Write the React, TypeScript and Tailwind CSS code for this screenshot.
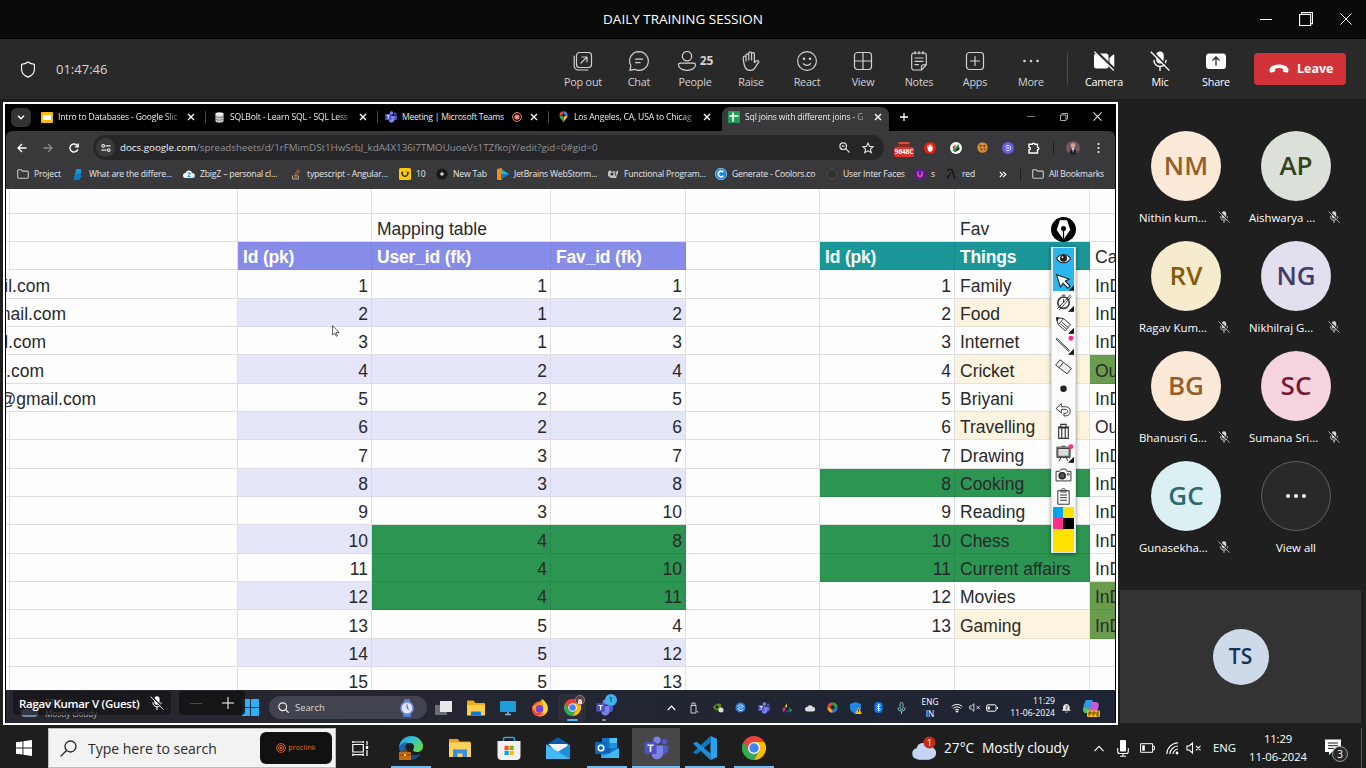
import React from "react";

type IconProps = { className?: string };

/* ---------- meeting toolbar icons ---------- */

const Stroke = ({ children, className = "size-5", w = 1.2 }: { children: React.ReactNode; className?: string; w?: number }) => (
  <svg viewBox="0 0 20 20" fill="none" stroke="currentColor" strokeWidth={w} strokeLinecap="round" strokeLinejoin="round" className={className}>
    {children}
  </svg>
);

const PopOutIcon = () => (
  <Stroke>
    <rect x="3.500" y="1.500" width="15" height="15" rx="3" />
    <path d="M1.200 5v9.700a4.300 4.300 0 0 0 4.300 4.300H15M8 12l5.800-5.800M9 6h5v5" />
  </Stroke>
);
const ChatIcon = () => (
  <Stroke>
    <path d="M10 .6a9.400 9.400 0 1 1-4.500 17.700L.9 19.400l1-4.700A9.400 9.400 0 0 1 10 .6ZM6.600 8.200h7M6.600 11.700h4.500" />
  </Stroke>
);
const PeopleIcon = () => (
  <Stroke>
    <circle cx="10" cy="5.200" r="4.700" />
    <path d="M3.300 12.200h13.400c1 0 1.800.8 1.800 1.800 0 3-3.500 5.400-8.500 5.400S1.500 17 1.500 14c0-1 .8-1.800 1.800-1.800Z" />
  </Stroke>
);
const RaiseIcon = () => (
  <Stroke>
    <path d="M5 10V4.200a1.400 1.400 0 0 1 2.800 0V9M7.800 9V2.200a1.400 1.400 0 0 1 2.800 0V9M10.600 9V3a1.400 1.400 0 0 1 2.800 0v8.500M13.400 11.500l2.200-1.700c1-.6 2.200.2 2.400 1.200-1.700 1.700-2.600 3.300-3.600 5.300-1 2-2.600 3.100-4.700 3.100C6 19.400 4 17 3.300 14 2.700 11.500 2.200 8.500 2.200 6.500a1.400 1.400 0 0 1 2.800 0" />
  </Stroke>
);
const ReactIcon = () => (
  <Stroke>
    <circle cx="10" cy="10" r="9.400" />
    <path d="M6.300 12.700c1.800 2.300 5.600 2.300 7.400 0" />
    <circle cx="7" cy="7.800" r=".7" fill="currentColor" />
    <circle cx="13" cy="7.800" r=".7" fill="currentColor" />
  </Stroke>
);
const ViewIcon = () => (
  <Stroke>
    <rect x="1.500" y="1.500" width="17" height="17" rx="3" />
    <path d="M10 1.500v17M1.500 10h17" />
  </Stroke>
);
const NotesIcon = () => (
  <Stroke>
    <path d="M5 2h10a2.300 2.300 0 0 1 2.300 2.300v9.500L12.500 19H5a2.300 2.300 0 0 1-2.300-2.300V4.300A2.300 2.300 0 0 1 5 2ZM17.300 13.800h-2.800a2 2 0 0 0-2 2V19M6 .6V3M10 .6V3M14 .6V3M6 7h8M6 10.300h8M6 13.600h3.500" />
  </Stroke>
);
const AppsIcon = () => (
  <Stroke>
    <rect x="1.500" y="1.500" width="17" height="17" rx="3" />
    <path d="M10 5.500v9M5.500 10h9" />
  </Stroke>
);
const MoreIcon = () => (
  <svg viewBox="0 0 20 20" fill="currentColor" className="size-5">
    <circle cx="3.500" cy="10" r="1.300" />
    <circle cx="10" cy="10" r="1.300" />
    <circle cx="16.500" cy="10" r="1.300" />
  </svg>
);
const CameraOffIcon = () => (
  <svg viewBox="0 0 22 20" className="h-5 w-[22px]">
    <path d="M3.500 2.500h9.500a2.500 2.500 0 0 1 2.500 2.500v10a2.500 2.500 0 0 1-2.500 2.500H3.500A2.500 2.500 0 0 1 1 15V5a2.500 2.500 0 0 1 2.500-2.500Z" fill="#fff" />
    <path d="M16.500 7 20 3.800c.6-.5 1.300-.2 1.300.6v11.200c0 .8-.7 1.100-1.300.6l-3.500-3.200Z" fill="#fff" />
    <path d="M3 .3 22 18.800" stroke="#292929" strokeWidth="2.600" />
    <path d="m1.300.6 19.500 18.900" stroke="#fff" strokeWidth="1.200" />
  </svg>
);
const MicOffIcon = ({ className = "size-5", cut = "#292929" }: IconProps & { cut?: string }) => (
  <svg viewBox="0 0 20 20" className={className}>
    <rect x="6.300" y=".5" width="7.400" height="12" rx="3.700" fill="currentColor" />
    <path d="M4 9.500a6 6 0 0 0 12 0M10 15.500v4" stroke="currentColor" strokeWidth="1.400" fill="none" strokeLinecap="round" />
    <path d="M2.300.3 20 18" stroke={cut} strokeWidth="1.800" />
    <path d="m.8.800 18.500 18.700" stroke="currentColor" strokeWidth="1.300" />
  </svg>
);
const ShareIcon = () => (
  <svg viewBox="0 0 22 20" className="h-5 w-[22px]">
    <rect x="1" y="2.500" width="20" height="15.500" rx="3" fill="#fff" />
    <path d="M11 14.800V6.500M7.500 9.500 11 6l3.500 3.500" stroke="#292929" strokeWidth="1.300" fill="none" />
  </svg>
);
const HangUpIcon = () => (
  <svg viewBox="0 0 20 10" className="h-[10px] w-5">
    <path d="M10 .6c4.300 0 7.400 1.300 8.900 3.400.8 1.200.6 2.700.3 3.700-.2.700-.8 1-1.500.9l-2.500-.5c-.8-.2-1.300-.8-1.300-1.500V4.800C12.500 4.300 11.300 4.100 10 4.100s-2.500.2-3.900.7v1.800c0 .7-.5 1.300-1.300 1.500l-2.500.5c-.7.1-1.300-.2-1.500-.9C.5 6.700.3 5.200 1.100 4 2.600 1.900 5.700.6 10 .6Z" fill="#fff" />
  </svg>
);

/* ---------- brand and app icons ---------- */

const ChromeIcon = ({ className = "size-6" }: IconProps) => (
  <svg viewBox="0 0 48 48" className={className}>
    <path d="M24 24 3.200 12A24 24 0 0 0 24 48l10.400-18Z" fill="#34a853" />
    <path d="M24 24l10.400 6L24 48A24 24 0 0 0 44.800 12H24Z" fill="#fbbc04" />
    <path d="M3.200 12 13.600 30 24 24V12h20.800A24 24 0 0 0 3.200 12Z" fill="#ea4335" />
    <circle cx="24" cy="24" r="12" fill="#fff" />
    <circle cx="24" cy="24" r="9.500" fill="#4285f4" />
  </svg>
);
const TeamsIcon = ({ className = "size-6" }: IconProps) => (
  <svg viewBox="0 0 24 24" className={className}>
    <circle cx="20.500" cy="5.500" r="2.700" fill="#5059c9" />
    <path d="M17 9.500h6.500c.3 0 .5.200.5.500V15a4 4 0 0 1-7 2Z" fill="#5059c9" />
    <circle cx="13" cy="4.200" r="3.600" fill="#7b83eb" />
    <path d="M8 9.500h11v8a6 6 0 0 1-11 3Z" fill="#7b83eb" />
    <rect x=".5" y="6" width="12" height="12" rx="1" fill="#4b53bc" />
    <path d="M3.500 9.200h6M6.500 9.200v6.500" stroke="#fff" strokeWidth="1.600" />
  </svg>
);
const FolderIcon = ({ className = "size-6" }: IconProps) => (
  <svg viewBox="0 0 24 24" className={className}>
    <path d="M1 3h9l1.500 2.500H22V20H1Z" fill="#e8a31c" />
    <path d="M1 6.500h22v14.500H1Z" fill="#fcd35e" />
    <path d="M5 21v-7.500h14V21h-4.500v-3.500h-5V21Z" fill="#3b8ede" />
  </svg>
);
const Folder11Icon = () => (
  <svg viewBox="0 0 20 18" className="h-[18px] w-5">
    <path d="M1 3c0-1 .6-1.500 1.500-1.500h5L9.500 4H18c.7 0 1 .4 1 1v10H1Z" fill="#f0a917" />
    <path d="M1 6h18v10.500H1Z" fill="#fdcf4b" />
    <path d="M5 16.500v-3c0-.6.400-1 1-1h8c.6 0 1 .4 1 1v3Z" fill="#1878cf" />
  </svg>
);
const EdgeIcon = () => (
  <svg viewBox="0 0 24 24" className="size-6">
    <defs>
      <linearGradient id="edgeTop" x1="0" y1="0" x2="1" y2=".6">
        <stop offset="0" stopColor="#2196d8" />
        <stop offset=".5" stopColor="#33c3d6" />
        <stop offset="1" stopColor="#63d84b" />
      </linearGradient>
    </defs>
    <path d="M0 12A12 12 0 0 1 12 0c7 0 12 5 12 10 0 4-3 6-6 6-2.500 0-4-1-4-2 0-.6 1-1 1-3a4 4 0 0 0-4-4C6 7 1 9 0 12Z" fill="url(#edgeTop)" />
    <path d="M0 12c1-4 5-6 9-5.500C6 8 6 12 7.500 15c2 4 7 6 14 3A12 12 0 0 1 0 12Z" fill="#1464b4" />
    <path d="M9 6.500C4.500 10 8 18 14 19.500c3 .5 6-.5 7.500-1.500A12 12 0 0 1 12 24C7 22 3 12 9 6.500Z" fill="#0f4c91" />
    <rect x="0" y="16" width="12" height="8" rx=".8" fill="#c66a12" />
    <path d="M4 16v-1.500h4V16M0 19h12" stroke="#7a3c06" strokeWidth="1" fill="none" />
    <rect x="5" y="18" width="2" height="2" fill="#ffd56a" />
  </svg>
);
const StoreIcon = () => (
  <svg viewBox="0 0 24 24" className="size-6">
    <path d="M6.500 6V3c0-1 .5-1.500 1.500-1.500h8c1 0 1.500.5 1.500 1.500v3" stroke="#29a8e8" strokeWidth="1.500" fill="none" />
    <path d="M.5 5h23v15a4 4 0 0 1-4 4h-15a4 4 0 0 1-4-4Z" fill="#f1f1f1" />
    <path d="M7.500 9.800h4.200V14H7.500Z" fill="#f25022" />
    <path d="M12.500 9.800h4.200V14h-4.200Z" fill="#7fba00" />
    <path d="M7.500 14.800h4.200V19H7.500Z" fill="#00a4ef" />
    <path d="M12.500 14.800h4.200V19h-4.200Z" fill="#ffb900" />
  </svg>
);
const MailIcon = () => (
  <svg viewBox="0 0 24 24" className="size-6">
    <path d="M0 9 12 1l12 8v14H0Z" fill="#0b5ca8" />
    <path d="M2.500 8h19v6L12 18Z" fill="#f4f4f4" />
    <path d="M0 8.500 12 16l12-7.500V23H0Z" fill="#27a5e8" />
    <path d="M0 23 24 8.500V23Z" fill="#1c8fdc" />
    <path d="M0 8.500 24 23H0Z" fill="#45bbf5" />
  </svg>
);
const OutlookIcon = () => (
  <svg viewBox="0 0 24 24" className="size-6">
    <path d="M7 2h15v15H7Z" fill="#1373c8" />
    <path d="M14.500 2H22v5h-7.500Z" fill="#50c4f7" />
    <path d="M14.500 7H22v5h-7.500Z" fill="#1a93e6" />
    <path d="M7 12h7.500v5H7Z" fill="#0a5aa5" />
    <path d="M6 13.500 15 18l9-6v10H6Z" fill="#1e9be9" />
    <path d="M6 22 24 12v10Z" fill="#43b7f2" />
    <rect y="6" width="12" height="12" rx="1" fill="#0a66be" />
    <circle cx="6" cy="12" r="2.800" fill="none" stroke="#fff" strokeWidth="1.600" />
  </svg>
);
const VsCodeIcon = () => (
  <svg viewBox="0 0 24 24" className="size-6">
    <path d="M17.500 0 24 2.800v18.400L17.500 24Z" fill="#29a3ee" />
    <path d="M17.500 6.500 3.300 18.600 0 16.600 17.500 0Z" fill="#0b79c4" />
    <path d="M17.500 17.500 3.300 5.400 0 7.400 17.500 24Z" fill="#1b8fdb" />
  </svg>
);
const FirefoxIcon = () => (
  <svg viewBox="0 0 20 20" className="size-[18px]">
    <circle cx="10" cy="11" r="8.500" fill="#ff5a36" />
    <path d="M12 0c4 2.500 7 6 6.500 11.500A8.500 8.500 0 0 1 10 19.500C4 19.500 1 15 1.500 9 3 6 4 7 6 6c3-1 5-3 6-6Z" fill="#ff9a1f" />
    <path d="M12 0c4 3 7.500 7 6.300 13C16.500 18 12 16 13.500 11 14 8 13 3 12 0Z" fill="#ffd52e" />
    <circle cx="9.500" cy="11" r="4.200" fill="#7544d8" />
    <path d="M1.500 8c2 7 5 9 11 7.500-2 4-10 4.500-11-2Z" fill="#f5334d" />
  </svg>
);
const WindowsIcon = ({ className = "size-4", fill = "#fff" }: IconProps & { fill?: string }) => (
  <svg viewBox="0 0 16 16" className={className} fill={fill}>
    <path d="M0 2.300 6.500 1.400v6.200H0ZM7.400 1.300 16 0v7.600H7.400ZM0 8.400h6.500v6.200L0 13.700ZM7.400 8.400H16V16l-8.600-1.300Z" />
  </svg>
);
const WeatherIcon = () => (
  <svg viewBox="0 0 26 24" className="h-6 w-[26px]">
    <path d="M6 23a5.500 5.500 0 0 1-.5-10.800 7 7 0 0 1 13-1.500A6 6 0 0 1 19.500 23Z" fill="#c3d4f4" />
    <path d="M1 18a12 7 0 0 0 24-1 5.600 5.600 0 0 1-5.500 6H6a5.500 5.500 0 0 1-5-5Z" fill="#8fb0e8" />
    <circle cx="18.500" cy="6.500" r="6" fill="#c42b1c" />
    <text x="18.500" y="10" fontSize="9.500" fill="#fff" textAnchor="middle" fontFamily="Open Sans, sans-serif">1</text>
  </svg>
);

const Close = ({ className = "size-2" }: IconProps) => (
  <svg viewBox="0 0 8 8" className={className} fill="none" stroke="currentColor" strokeWidth="1.400">
    <path d="m1 1 6 6M7 1 1 7" />
  </svg>
);
const FolderOutline = () => (
  <svg viewBox="0 0 12 10" className="h-[10px] w-3" fill="none" stroke="#c8c8ca" strokeWidth="1.100">
    <path d="M.7 1.700c0-.6.300-.9.900-.9h2.700l1.200 1.300h5c.5 0 .8.300.8.800v5.400c0 .5-.3.900-.8.900H1.500c-.5 0-.8-.4-.8-.9Z" />
  </svg>
);
const WifiIcon = ({ className = "size-3" }: IconProps) => (
  <svg viewBox="0 0 14 12" className={className} fill="none" stroke="currentColor" strokeWidth="1.100">
    <path d="M.6 4.300a9 9 0 0 1 12.800 0M2.500 6.500a6.300 6.300 0 0 1 9 0M4.500 8.500a3.500 3.500 0 0 1 5 0" />
    <circle cx="7" cy="10.200" r=".9" fill="currentColor" />
  </svg>
);
const MutedSpeaker = ({ className = "h-3 w-4" }: IconProps) => (
  <svg viewBox="0 0 16 12" className={className} fill="none" stroke="currentColor" strokeWidth="1.100">
    <path d="M1 4v4h2.200L6.500 11V1L3.200 4ZM10 3.800l4.500 4.500M14.500 3.800 10 8.300" />
  </svg>
);

/* ---------- title bar and meeting toolbar ---------- */

function TitleBar() {
  return (
    <header className="flex h-[39px] items-center border-b border-black bg-[#0a0a0a] text-white">
      <div className="w-[170px]" />
      <h1 className="flex-1 pl-[172px] text-center text-[13.500px]">DAILY TRAINING SESSION</h1>
      <div className="flex w-[342px] items-center justify-end gap-[27px] pr-[14px]">
        <div className="h-px w-3 bg-white" />
        <svg viewBox="0 0 14 14" className="size-[14px]" fill="none" stroke="#fff" strokeWidth="1.100">
          <path d="M.6 2.500h11v11h-11ZM2.500 2.500V.6h11v11h-2" />
        </svg>
        <svg viewBox="0 0 12 12" className="size-3" fill="none" stroke="#fff" strokeWidth="1">
          <path d="m.4.400 11.200 11.200M11.600.4.400 11.600" />
        </svg>
      </div>
    </header>
  );
}

function ToolButton({ label, children, bright }: { label: string; children: React.ReactNode; bright?: boolean }) {
  return (
    <button className={`flex w-14 flex-col items-center pt-[3px] ${bright ? "text-white" : "text-[#d1d1d1]"}`}>
      <span className="flex h-5 items-center gap-[3px]">{children}</span>
      <span className="mt-[3px] text-[10.800px] leading-[16px] tracking-[-0.02em] whitespace-nowrap">{label}</span>
    </button>
  );
}

function MeetingBar() {
  return (
    <div className="flex h-[60px] items-center bg-[#292929]">
      <svg viewBox="0 0 16 18" className="ml-5 h-[17px] w-4 text-white" fill="none" stroke="#fff" strokeWidth="1.200">
        <path d="M8 1c2 1.500 4.300 2.300 6.800 2.400v5.400c0 4-2.500 6.700-6.800 8.300-4.300-1.600-6.800-4.300-6.800-8.300V3.400C3.700 3.300 6 2.500 8 1Z" />
      </svg>
      <span className="ml-5 w-[499px] pt-[2px] text-[13px] text-[#d6d6d6]">01:47:46</span>
      <div className="flex">
        <ToolButton label="Pop out"><PopOutIcon /></ToolButton>
        <ToolButton label="Chat"><ChatIcon /></ToolButton>
        <ToolButton label="People"><PeopleIcon /><b className="text-[12px] font-bold">25</b></ToolButton>
        <ToolButton label="Raise"><RaiseIcon /></ToolButton>
        <ToolButton label="React"><ReactIcon /></ToolButton>
        <ToolButton label="View"><ViewIcon /></ToolButton>
        <ToolButton label="Notes"><NotesIcon /></ToolButton>
        <ToolButton label="Apps"><AppsIcon /></ToolButton>
        <ToolButton label="More"><MoreIcon /></ToolButton>
      </div>
      <div className="ml-2 h-8 w-px bg-[#4b4b4b]" />
      <div className="ml-2 flex">
        <ToolButton label="Camera" bright><CameraOffIcon /></ToolButton>
        <ToolButton label="Mic" bright><MicOffIcon /></ToolButton>
        <ToolButton label="Share" bright><ShareIcon /></ToolButton>
      </div>
      <button className="ml-[10px] flex h-8 w-[92px] items-center rounded-[4px] bg-[#d13438] pl-[15px] text-white">
        <HangUpIcon />
        <span className="ml-2 text-[12.500px] font-bold">Leave</span>
      </button>
    </div>
  );
}

/* ---------- shared browser window ---------- */

function Tab({ icon, title, width, extra, sep }: { icon: React.ReactNode; title: string; width: string; extra?: React.ReactNode; sep?: boolean }) {
  return (
    <div className={`flex h-full items-center ${width}`}>
      <span className="flex w-3 shrink-0 justify-center">{icon}</span>
      <span className={`ml-[5px] shrink-0 overflow-hidden text-[8.600px] whitespace-nowrap text-[#ececec] ${extra ? "w-[103px] tracking-[-0.03em]" : "w-[121px] tracking-[-0.02em] [mask-image:linear-gradient(to_right,#000_88%,rgba(0,0,0,.25))]"}`}>{title}</span>
      {extra}
      <Close className="ml-[8px] size-2 shrink-0 text-white" />
      {sep && <span className="ml-[10px] h-3 w-px bg-[#4a4a4a]" />}
    </div>
  );
}

function TabStrip() {
  return (
    <div className="flex h-[27px] items-center bg-black">
      <div className="ml-[5px] flex h-[19px] w-5 items-center justify-center rounded-[6px] bg-[#333335]">
        <svg viewBox="0 0 8 5" className="h-[5px] w-2" fill="none" stroke="#fff" strokeWidth="1.400"><path d="m1 .8 3 3 3-3" /></svg>
      </div>
      <div className="ml-[10px] flex h-full items-center pb-px">
        <Tab width="w-[172px]" sep title="Intro to Databases - Google Slic" icon={<span className="flex h-[11px] w-3 items-center justify-center rounded-[1px] bg-[#f5ba15]"><span className="h-[5px] w-2 bg-white" /></span>} />
        <Tab
          width="w-[172px]"
          sep
          title="SQLBolt - Learn SQL - SQL Less"
          icon={
            <svg viewBox="0 0 10 12" className="h-[11px] w-[9px]">
              <path d="M.5 2v8C.5 12.500 9.500 12.500 9.500 10V2Z" fill="#c9ced2" />
              <ellipse cx="5" cy="2" rx="4.500" ry="1.700" fill="#f2f2f2" />
              <path d="M.5 4.700c1 2 8 2 9 0M.5 7.500c1 2 8 2 9 0" stroke="#6f7a82" fill="none" />
            </svg>
          }
        />
        <Tab
          width="w-[172px]"
          sep
          title="Meeting | Microsoft Teams"
          icon={<TeamsIcon className="size-3" />}
          extra={
            <svg viewBox="0 0 10 10" className="ml-[7px] size-[10px] shrink-0">
              <circle cx="5" cy="5" r="4.400" fill="none" stroke="#f28b7d" />
              <circle cx="5" cy="5" r="2.600" fill="#f28b7d" />
            </svg>
          }
        />
        <Tab
          width="w-[165px]"
          title="Los Angeles, CA, USA to Chicag"
          icon={
            <svg viewBox="0 0 10 13" className="h-3 w-[9px]">
              <path d="M5 13C4.500 9.500.500 8.500.500 4.700L5 4.700Z" fill="#34a853" />
              <path d="M5 13c.5-3.500 4.500-4.500 4.500-8.300H5Z" fill="#fbbc04" />
              <path d="M.5 4.700A4.500 4.500 0 0 1 5 .2v4.500Z" fill="#ea4335" />
              <path d="M9.500 4.700A4.500 4.500 0 0 0 5 .2v4.500Z" fill="#4285f4" />
              <circle cx="5" cy="4.700" r="1.600" fill="#111" />
            </svg>
          }
        />
      </div>
      <div className="mt-[3px] ml-0 flex h-6 w-[167px] items-center rounded-t-[8px] bg-[#39393b] pb-[4px] pl-[6px]">
        <Tab
          width="w-[161px]"
          title="Sql joins with different joins - G"
          icon={
            <svg viewBox="0 0 12 12" className="size-3">
              <rect width="12" height="12" rx="1" fill="#249a57" />
              <path d="M5 1.500v9M1.500 5h9" stroke="#fff" strokeWidth="1.600" />
            </svg>
          }
        />
      </div>
      <svg viewBox="0 0 8 8" className="mb-[2px] ml-[11px] size-2" stroke="#fff" strokeWidth="1.300"><path d="M4 0v8M0 4h8" /></svg>
      <div className="mb-[2px] ml-auto flex items-center gap-[25px] pr-[13px] text-[#d0d0d0]">
        <span className="h-px w-2 bg-[#7a7a7a]" />
        <svg viewBox="0 0 8 8" className="size-2" fill="none" stroke="#bbb" strokeWidth=".9"><path d="M.5 2h5.500v5.500H.5ZM2 1.800V.5h5.500v5.500H6.300" /></svg>
        <svg viewBox="0 0 8 8" className="size-[9px]" fill="none" stroke="#e8e8e8" strokeWidth=".9"><path d="m.4.400 7.200 7.200M7.600.4.400 7.600" /></svg>
      </div>
    </div>
  );
}

const Slot26 = ({ children }: { children: React.ReactNode }) => <span className="flex w-[26px] shrink-0 items-center justify-center">{children}</span>;

function AddressBar() {
  return (
    <div className="flex h-8 items-center rounded-t-[6px] bg-[#39393b] pt-px pl-[3px]">
      <Slot26>
        <svg viewBox="0 0 10 10" className="size-[10px]" fill="none" stroke="#fff" strokeWidth="1.300"><path d="M9.500 5H1M5 1 1 5l4 4" /></svg>
      </Slot26>
      <Slot26>
        <svg viewBox="0 0 10 10" className="size-[10px]" fill="none" stroke="#8a8a8c" strokeWidth="1.300"><path d="M.5 5H9M5 1l4 4-4 4" /></svg>
      </Slot26>
      <Slot26>
        <svg viewBox="0 0 10 10" className="size-[10px]" fill="none" stroke="#fff" strokeWidth="1.400"><path d="M8.800 6.200A4 4 0 1 1 7.800 2.200L9 3.500M9.200.5v3.400H5.800" /></svg>
      </Slot26>
      <div className="ml-[6px] flex h-[25px] w-[791px] items-center rounded-full bg-[#262629] pl-[3px]">
        <span className="flex size-[19px] items-center justify-center rounded-full bg-[#3a3a3d]">
          <svg viewBox="0 0 10 8" className="h-2 w-[10px]" fill="none" stroke="#e8e8e8" strokeWidth="1.100">
            <circle cx="2.200" cy="1.900" r="1.300" /><path d="M4.500 1.900H9.500M.5 6.100h5" /><circle cx="7.800" cy="6.100" r="1.300" />
          </svg>
        </span>
        <span className="ml-[5px] flex-1 pt-px text-[9.770px] whitespace-nowrap text-[#929296]">
          <span className="text-[#f2f2f2]">docs.google.com</span>/spreadsheets/d/1rFMimDSt1HwSrbJ_kdA4X136i7TMOUuoeVs1TZfkojY/edit?gid=0#gid=0
        </span>
        <svg viewBox="0 0 11 11" className="mr-[12px] size-[11px]" fill="none" stroke="#dcdcdc" strokeWidth="1.200"><circle cx="4.200" cy="4.200" r="3.300" /><path d="m6.700 6.700 3.800 3.800M2.700 4.200h3" /></svg>
        <svg viewBox="0 0 12 12" className="mr-[10px] size-3" fill="none" stroke="#e0e0e0" strokeWidth="1.100"><path d="m6 1 1.500 3.400 3.700.3-2.800 2.400.9 3.600L6 8.800l-3.300 1.900.9-3.600L.8 4.700l3.700-.3Z" /></svg>
      </div>
      <div className="ml-[7px] flex items-center">
        <Slot26>
          <span className="flex flex-col items-center pt-[3px]">
            <span className="h-[5px] w-3 rounded-t-[2px] border-t-2 border-[#e0493c] bg-[#8b2b26]" />
            <span className="rounded-[2px] bg-[#e0352b] px-px text-[6.500px] leading-[10px] font-bold tracking-[-0.02em] text-white">9648C</span>
          </span>
        </Slot26>
        <Slot26>
          <svg viewBox="0 0 12 12" className="size-3"><circle cx="6" cy="6" r="6" fill="#e8200f" /><path d="M4 6V3.500M5.300 6V2.600M6.600 6V2.600M7.900 6.500V3.500" stroke="#fff" strokeWidth="1" /><path d="M3.500 5h5v3A2.500 2.500 0 0 1 4 8.500Z" fill="#fff" /></svg>
        </Slot26>
        <Slot26>
          <svg viewBox="0 0 12 12" className="size-3"><circle cx="6" cy="6" r="6" fill="#f5f5f5" /><path d="M2.500 8.500 8.500 2l.5 3-4 5Z" fill="#1ca43c" /><path d="m2.500 5 4-3-3 6Z" fill="#e23a2e" /><path d="m4 10.500 5-6 .5 3Z" fill="#111" /></svg>
        </Slot26>
        <Slot26>
          <svg viewBox="0 0 12 12" className="size-[11px]"><circle cx="6" cy="6" r="5.700" fill="#d18a3b" /><g fill="#5c3210"><circle cx="4" cy="4" r="1" /><circle cx="8" cy="4.500" r="1" /><circle cx="5" cy="8" r="1" /><circle cx="8.500" cy="8" r=".8" /></g></svg>
        </Slot26>
        <Slot26>
          <svg viewBox="0 0 12 12" className="size-3"><circle cx="6" cy="6" r="6" fill="#6a5be8" /><path d="M3.500 4.500C5 2.500 9 3.500 8.500 6.500 8 9 5 9 4 8M4 6h3" stroke="#fff" fill="none" /></svg>
        </Slot26>
        <Slot26>
          <svg viewBox="0 0 12 12" className="size-3" fill="none" stroke="#fff" strokeWidth="1.400"><path d="M1 2.300h3.200c.2-1.600 2.400-1.600 2.600 0H9.500V5c1.800.2 1.800 2.600 0 2.800v3.200H1V7.800c1.800-.2 1.800-2.600 0-2.800Z" /></svg>
        </Slot26>
        <span className="ml-[6px] h-3 w-px bg-[#1c1c1e]" />
        <span className="ml-3 flex size-[14px] items-end justify-center overflow-hidden rounded-full bg-[#79565e]">
          <svg viewBox="0 0 14 14" className="size-[14px]"><circle cx="7" cy="4.500" r="2.400" fill="#c9a59a" /><path d="M3 14c0-8 8-8 8 0Z" fill="#1d2134" /><path d="m6 7 1 5 1-5Z" fill="#e8e8e8" /></svg>
        </span>
        <svg viewBox="0 0 3 12" className="ml-[17px] h-3 w-[3px]" fill="#ececec"><circle cx="1.500" cy="2" r="1.100" /><circle cx="1.500" cy="6" r="1.100" /><circle cx="1.500" cy="10" r="1.100" /></svg>
      </div>
    </div>
  );
}

const bookmarks: { label: string; width: string; icon: React.ReactNode }[] = [
  { label: "Project", width: "w-[55px]", icon: <FolderOutline /> },
  { label: "What are the differe...", width: "w-[111px]", icon: <svg viewBox="0 0 12 12" className="size-3"><path d="M4 1h5v5L6 8 3 6.500Z" fill="#1597e6" /><path d="M2 8 6 5l4 3-3 4H2Z" fill="#0c7bc9" /></svg> },
  { label: "ZbigZ – personal cl...", width: "w-[107px]", icon: <svg viewBox="0 0 12 12" className="size-3"><path d="M2.500 10a2.500 2.500 0 0 1 0-5 3.500 3.500 0 0 1 6.700 0 2.500 2.500 0 0 1 .3 5Z" fill="#eaf3f8" /><path d="M4.500 5h3L4.700 8.600h3" stroke="#1597d6" fill="none" /></svg> },
  { label: "typescript - Angular...", width: "w-[109px]", icon: <svg viewBox="0 0 12 12" className="size-3" fill="none"><path d="M2.500 7.500v3.500h6V7.500" stroke="#a9a9a9" /><path d="M4 9h3.300M4 7.300l3.300.5M4.600 5.300l3 1.300M6 3l2.600 2.300M8 1.500l1.400 3" stroke="#e87424" /></svg> },
  { label: "10", width: "w-[37px]", icon: <svg viewBox="0 0 12 12" className="size-3"><rect width="12" height="12" rx="1.500" fill="#fcc60d" /><path d="M3 4.500c0 5 6 5 6 0M2.200 4.500h2M7.800 4.500h2" stroke="#25272b" strokeWidth="1.300" fill="none" /></svg> },
  { label: "New Tab", width: "w-[61px]", icon: <svg viewBox="0 0 12 12" className="size-3"><circle cx="6" cy="6" r="5.500" fill="#18181a" /><circle cx="6" cy="6" r="1.800" fill="#cfcfcf" /></svg> },
  { label: "JetBrains WebStorm...", width: "w-[110px]", icon: <svg viewBox="0 0 12 12" className="size-3"><path d="M0 1 5 0v12H0Z" fill="#f28a1c" /><path d="m4 1 8 5-8 5Z" fill="#12c1c9" /><path d="m4 6 8 0-8 5Z" fill="#1677c9" /></svg> },
  { label: "Functional Program...", width: "w-[108px]", icon: <svg viewBox="0 0 12 12" className="size-3"><path d="M1 4 3 2l2 2 2-1 2 1 2-2v3l-2 5H4L1 8Z" fill="#bfc2c4" /><circle cx="5" cy="6" r="1.500" fill="#333" /><path d="m8 4 1 4" stroke="#444" /></svg> },
  { label: "Generate - Coolors.co", width: "w-[111px]", icon: <svg viewBox="0 0 12 12" className="size-3"><circle cx="6" cy="6" r="5.700" fill="#1787f0" stroke="#dcecff" strokeWidth=".6" /><path d="M8.300 4.300a2.800 2.800 0 1 0 0 3.400" stroke="#fff" strokeWidth="1.700" fill="none" /></svg> },
  { label: "User Inter Faces", width: "w-[88px]", icon: <svg viewBox="0 0 12 12" className="size-3"><circle cx="6" cy="6" r="4.800" fill="#313133" stroke="#4c4c4f" /></svg> },
  { label: "s", width: "w-[31px]", icon: <svg viewBox="0 0 12 12" className="size-3"><circle cx="6" cy="6" r="5.500" fill="#5b1a9c" /><path d="M4 3.500v3c0 2.500 4 2.500 4 0v-3" stroke="#f04aa8" strokeWidth="1.600" fill="none" /></svg> },
  { label: "red", width: "w-[54px]", icon: <svg viewBox="0 0 12 12" className="size-3" fill="none" stroke="#161618" strokeWidth="1.500"><path d="M2 3c2-3 6-2 6 2l2 6M6 4 2 11" /></svg> },
];

function Bookmarks() {
  return (
    <div className="flex h-[26px] items-center bg-[#39393b] pb-[3px] pl-[11px] text-[8.600px] tracking-[-0.02em] whitespace-nowrap text-[#e8e8e8]">
      {bookmarks.map((b) => (
        <span key={b.label} className={`flex shrink-0 items-center gap-[5px] ${b.width}`}>
          {b.icon}
          {b.label}
        </span>
      ))}
      <svg viewBox="0 0 8 7" className="h-[7px] w-2" fill="none" stroke="#fff" strokeWidth="1.200"><path d="m.8.800 2.600 2.700L.8 6.200M4.200.8l2.600 2.700-2.600 2.700" /></svg>
      <span className="ml-[13px] h-3 w-px bg-[#1c1c1e]" />
      <span className="ml-[11px] flex items-center gap-[5px]">
        <FolderOutline />
        All Bookmarks
      </span>
    </div>
  );
}

/* ---------- spreadsheet ---------- */

type Row = { email?: string; emailWidth?: string; m: [number, number, number]; greenMap?: boolean; fav?: string; favGreen?: boolean; favCream?: boolean; place?: string; placeGreen?: boolean };

const rows: Row[] = [
  { email: "il.com", emailWidth: "w-[44px]", m: [1, 1, 1], fav: "Family", place: "InD" },
  { email: "mail.com", emailWidth: "w-[60px]", m: [2, 1, 2], fav: "Food", favCream: true, place: "InD" },
  { email: "l.com", emailWidth: "w-[40px]", m: [3, 1, 3], fav: "Internet", place: "InD" },
  { email: ".com", emailWidth: "w-[38px]", m: [4, 2, 4], fav: "Cricket", favCream: true, place: "Ou", placeGreen: true },
  { email: "@gmail.com", emailWidth: "w-[90px]", m: [5, 2, 5], fav: "Briyani", place: "InD" },
  { m: [6, 2, 6], fav: "Travelling", favCream: true, place: "Ou" },
  { m: [7, 3, 7], fav: "Drawing", place: "InD" },
  { m: [8, 3, 8], fav: "Cooking", favGreen: true, place: "InD" },
  { m: [9, 3, 10], fav: "Reading", place: "InD" },
  { m: [10, 4, 8], greenMap: true, fav: "Chess", favGreen: true, place: "InD" },
  { m: [11, 4, 10], greenMap: true, fav: "Current affairs", favGreen: true, place: "InD" },
  { m: [12, 4, 11], greenMap: true, fav: "Movies", place: "InD", placeGreen: true },
  { m: [13, 5, 4], fav: "Gaming", favCream: true, place: "InD", placeGreen: true },
  { m: [14, 5, 12] },
  { m: [15, 5, 13] },
];

const line = "border-[#dfdfe2]";
const greenCell = "bg-[#2c9552] border-[#278a4b]";

function Cell({ w, tone = line, right, bold, children }: { w: string; tone?: string; right?: boolean; bold?: boolean; children?: React.ReactNode }) {
  return (
    <div className={`flex shrink-0 items-center overflow-hidden border-r border-b pt-[3px] whitespace-nowrap ${w} ${tone} ${right ? "justify-end pr-[3px]" : "pl-[5px]"} ${bold ? "font-bold tracking-[-0.01em] text-white" : ""}`}>
      {children}
    </div>
  );
}

const Lead = () => (
  <>
    <div className={`w-[4px] shrink-0 border-r border-b ${line}`} />
    <div className={`w-[228px] shrink-0 border-r border-b ${line}`} />
  </>
);

const SheetRow = ({ children, first }: { children: React.ReactNode; first?: boolean }) => (
  <div className={`flex shrink-0 ${first ? "h-[24.800px]" : "h-[28.330px]"}`}>{children}</div>
);

function Sheet() {
  const purple = "bg-[#888ce9] border-[#7f83df]";
  const teal = "bg-[#1c9799] border-[#1a8c8e]";
  return (
    <div className="flex h-[501px] flex-col overflow-hidden bg-[#fefefe] font-['Liberation_Sans',Arial,sans-serif] text-[17.500px] leading-[22px] text-[#29292b]">
      <SheetRow first>
        <Lead /><Cell w="w-[134px]" /><Cell w="w-[179px]" /><Cell w="w-[135px]" /><Cell w="w-[134px]" /><Cell w="w-[135px]" /><Cell w="w-[135px]" /><Cell w="w-[26px]" />
      </SheetRow>
      <SheetRow>
        <Lead /><Cell w="w-[134px]" /><Cell w="w-[179px]">Mapping table</Cell><Cell w="w-[135px]" /><Cell w="w-[134px]" /><Cell w="w-[135px]" /><Cell w="w-[135px]">Fav</Cell><Cell w="w-[26px]" />
      </SheetRow>
      <SheetRow>
        <Lead />
        <Cell w="w-[134px]" tone={purple} bold>Id (pk)</Cell>
        <Cell w="w-[179px]" tone={purple} bold>User_id (fk)</Cell>
        <Cell w="w-[135px]" tone={purple} bold>Fav_id (fk)</Cell>
        <Cell w="w-[134px]" />
        <Cell w="w-[135px]" tone={teal} bold>Id (pk)</Cell>
        <Cell w="w-[135px]" tone={teal} bold>Things</Cell>
        <Cell w="w-[26px]">Ca</Cell>
      </SheetRow>
      {rows.map((r, i) => {
        const lilac = i % 2 === 1 ? "bg-[#e6e6fb] border-[#dadaee]" : line;
        const map = r.greenMap ? greenCell : lilac;
        return (
          <SheetRow key={i}>
            {r.email ? (
              <div className={`flex w-[232px] shrink-0 border-r border-b pt-[3px] ${line}`}>
                <span className={`flex items-center justify-end overflow-hidden ${r.emailWidth}`}>{r.email}</span>
              </div>
            ) : (
              <Lead />
            )}
            <Cell w="w-[134px]" tone={lilac} right>{r.m[0]}</Cell>
            <Cell w="w-[179px]" tone={map} right>{r.m[1]}</Cell>
            <Cell w="w-[135px]" tone={map} right>{r.m[2]}</Cell>
            <Cell w="w-[134px]" />
            <Cell w="w-[135px]" tone={r.favGreen ? greenCell : line} right>{r.fav ? i + 1 : null}</Cell>
            <Cell w="w-[135px]" tone={r.favGreen ? greenCell : r.favCream ? "bg-[#fdf4df] border-[#ece3cf]" : line}>{r.fav}</Cell>
            <Cell w="w-[26px]" tone={r.placeGreen ? "bg-[#699c4c] border-[#5f9143]" : line}>{r.place}</Cell>
          </SheetRow>
        );
      })}
    </div>
  );
}

/* ---------- remote taskbar ---------- */

const Slot23 = ({ children }: { children: React.ReactNode }) => <span className="flex w-[23px] shrink-0 items-center justify-center">{children}</span>;
const Slot32 = ({ children }: { children: React.ReactNode }) => <span className="relative flex h-full w-8 shrink-0 items-center justify-center">{children}</span>;

function RemoteTaskbar() {
  return (
    <div className="flex h-[33px] items-center bg-gradient-to-r from-[#28272f] via-[#222632] to-[#1f2434] pt-[2px] text-white">
      <div className="flex w-[236px] shrink-0 items-center gap-[6px] pl-[15px] text-[#b5b5b8]">
        <svg viewBox="0 0 18 20" className="h-5 w-[18px]"><rect y="11" width="17" height="8" rx="4" fill="#6f88ad" /><circle cx="13" cy="6" r="5" fill="#a04a4a" /></svg>
        <div className="text-[8.200px] leading-[11px]"><div>27°C</div><div>Mostly cloudy</div></div>
      </div>
      <svg viewBox="0 0 17 17" className="size-[17px]" fill="#2fb0f5"><path d="M0 0h8v8H0ZM9 0h8v8H9ZM0 9h8v8H0ZM9 9h8v8H9Z" /></svg>
      <div className="ml-[10px] flex h-[23px] w-[158px] items-center rounded-full bg-[#41444f] pr-3 pl-[9px]">
        <svg viewBox="0 0 11 11" className="size-[11px]" fill="none" stroke="#eee" strokeWidth="1.200"><circle cx="4.700" cy="4.700" r="3.900" /><path d="m7.500 7.500 3.200 3.200" /></svg>
        <span className="ml-[6px] flex-1 pt-px text-[9.400px] text-[#d8d8dc]">Search</span>
        <svg viewBox="0 0 16 18" className="h-[18px] w-4"><path d="M5 0h6l1 18H4Z" fill="#4f7fd0" /><circle cx="8" cy="9" r="6" fill="#dfe6f5" stroke="#7b8ff0" strokeWidth="1.600" /><path d="M8 5.500V9l2 1.500" stroke="#44549a" fill="none" /></svg>
      </div>
      <div className="ml-px flex h-full">
        <Slot32><svg viewBox="0 0 18 16" className="h-4 w-[18px]"><rect y="5" width="12" height="10" fill="#6a6c72" /><rect x="5" y="1" width="12" height="11" fill="#e8e8ea" /></svg></Slot32>
        <Slot32><Folder11Icon /></Slot32>
        <Slot32><svg viewBox="0 0 18 16" className="h-4 w-[18px]"><rect x="1" y="1" width="16" height="11" rx="1" fill="#1b9edb" /><path d="M6 14.500h6M9 12v2.500" stroke="#7bb9d8" strokeWidth="1.500" /></svg></Slot32>
        <Slot32><FirefoxIcon /></Slot32>
        <Slot32>
          <span className="flex h-7 w-7 items-center justify-center rounded-[4px] bg-[#2c2f3a]"><ChromeIcon className="size-[17px]" /></span>
          <span className="absolute top-[3px] right-[3px] flex size-[10px] items-end justify-center rounded-full border border-[#9a7c70] bg-[#5a3f3c]"><span className="h-[5px] w-1 rounded-t-full bg-[#e3d6d0]" /></span>
          <span className="absolute bottom-[2px] h-[2px] w-[11px] rounded-full bg-[#4cb4f0]" />
        </Slot32>
        <Slot32>
          <TeamsIcon className="size-[17px]" />
          <span className="absolute top-[2px] right-[3px] flex size-[12px] items-center justify-center rounded-full bg-[#3fb3f2] text-[7.500px] leading-none text-black">1</span>
          <span className="absolute bottom-[2px] h-[2px] w-1 rounded-full bg-[#8e9098]" />
        </Slot32>
      </div>
      <div className="ml-10 flex items-center">
        <span className="flex w-[23px] justify-center"><svg viewBox="0 0 9 6" className="h-[6px] w-[9px]" fill="none" stroke="#fff" strokeWidth="1.200"><path d="m.8 5 3.700-3.800L8.200 5" /></svg></span>
        <Slot23><svg viewBox="0 0 9 12" className="h-3 w-[9px]" fill="none" stroke="#ddd" strokeWidth=".9"><path d="M1 3.500h5v7.500H1ZM2 3.500V1h3v2.500M7 9l1.500 1.500" /></svg></Slot23>
        <Slot23><svg viewBox="0 0 12 10" className="h-[10px] w-3"><path d="M1 4c3-4 6-4 8-3v6C6 8 3 8 1 4Z" fill="#5d8a1a" /><circle cx="9" cy="7" r="2.500" fill="#ddd" /><circle cx="5" cy="4" r="1.500" fill="#17210a" /></svg></Slot23>
        <Slot23><svg viewBox="0 0 12 12" className="size-[11px]"><circle cx="6" cy="6" r="5.500" fill="#2f7ee6" /><path d="M3.500 7.500c2-4 3 2 5-3M3 5c1-2 5-2.500 6 0M9 7.500c-1 2-4 2.500-6 0" stroke="#fff" fill="none" strokeWidth=".9" /></svg></Slot23>
        <Slot23><TeamsIcon className="size-3" /></Slot23>
        <Slot23><svg viewBox="0 0 12 12" className="size-[10px]"><path d="M6 0v5H3Z" fill="#e5c31a" /><path d="m2 5 3 2-3 4-2-3Z" fill="#d02c7c" /><path d="m9 5 3 4-3 2Z" fill="#2ba84c" /><path d="M4 11h5l-2-3Z" fill="#234ad8" /></svg></Slot23>
        <Slot23><svg viewBox="0 0 12 9" className="h-2 w-3"><path d="M3 8.500a2.500 2.500 0 0 1-.2-5 3.500 3.500 0 0 1 6.500 0 2.500 2.500 0 0 1 0 5Z" fill="#dcdce0" /></svg></Slot23>
        <Slot23><svg viewBox="0 0 12 12" className="size-[11px]" fill="none" strokeWidth="3.300"><path d="M2 6a4 4 0 0 1 4-4" stroke="#e8452f" /><path d="M6 2a4 4 0 0 1 4 4" stroke="#2aa84a" /><path d="M10 6a4 4 0 0 1-4 4" stroke="#1d7de0" /><path d="M6 10a4 4 0 0 1-4-4" stroke="#f5a623" /></svg></Slot23>
        <Slot23><svg viewBox="0 0 12 12" className="size-3"><path d="M5.500 0 11 2v4c0 3-3 5-5.500 6C3 11 0 9 0 6V2Z" fill="#1e88e0" /><path d="m8.500 5 3.500 7H5Z" fill="#f8b51e" /><path d="M8.500 7.500v2" stroke="#222" /></svg></Slot23>
        <Slot23><svg viewBox="0 0 9 12" className="h-[11px] w-[9px]"><rect width="9" height="12" rx="4" fill="#0a78e8" /><path d="m2.500 4 4 4-2 2V2l2 2-4 4" stroke="#fff" fill="none" strokeWidth=".9" /></svg></Slot23>
        <Slot23><svg viewBox="0 0 9 12" className="h-3 w-[9px]" fill="none" stroke="#8fd0d8" strokeWidth=".9"><rect x="3" y=".5" width="3" height="7" rx="1.500" /><path d="M.8 5.500a3.700 3.700 0 0 0 7.400 0M4.500 9.300V12" /></svg></Slot23>
        <div className="flex w-[34px] flex-col items-center text-[8.300px] leading-[11.500px]"><span>ENG</span><span>IN</span></div>
        <span className="flex w-5 justify-center"><WifiIcon className="h-[10px] w-3" /></span>
        <span className="flex w-[15px] justify-center"><MutedSpeaker className="h-[9px] w-3" /></span>
        <span className="flex w-5 justify-center"><svg viewBox="0 0 12 8" className="h-2 w-3" fill="none" stroke="#fff"><rect x=".6" y=".8" width="9.500" height="6.400" rx="1.500" /><path d="M11.500 3v2" /><path d="M2.700 2.500v3" strokeWidth="2" /></svg></span>
        <div className="flex w-[53px] flex-col items-end text-[8.600px] leading-[11.500px]"><span>11:29</span><span>11-06-2024</span></div>
        <span className="flex w-[22px] justify-center"><svg viewBox="0 0 12 12" className="size-[11px]"><path d="M1 9.500 2.300 7.500V5a3.600 3.600 0 0 1 7 0v2.500L10.600 9.500Z" fill="#f0f0f0" /><path d="M4.500 10.500c.5 1.300 2.500 1.300 3 0Z" fill="#f0f0f0" /><path d="M5 4.500h2.500L5 7.500h2.500M9 .8h2L9 3h2" stroke="#222" fill="none" strokeWidth=".7" /></svg></span>
        <span className="flex w-[28px] justify-center"><svg viewBox="0 0 18 18" className="size-[18px]"><path d="M5 1h6L8 12H2C0 12 1 9 2 6s1-5 3-5Z" fill="#2a9be8" /><path d="M10 3h4c3 0 3 3 2.500 5S15 15 12 15H6Z" fill="#c65ad8" /><path d="M2 9h5l-1 5H3C1 14 1 11 2 9Z" fill="#55c06a" /><rect x="5" y="11.500" width="13" height="6.500" rx="1" fill="#f5b91f" /><path d="M7 17v-4h2v2H7M11 17v-4h2v2h-2M17 13h-2v4h2M15 15h2" stroke="#4a3200" fill="none" strokeWidth=".8" /></svg></span>
      </div>
    </div>
  );
}

/* ---------- floating annotation palette ---------- */

function Palette() {
  const corner = <path d="M24 16v6h-6Z" fill="#111" />;
  const s = { fill: "none", stroke: "#333", strokeWidth: 1.1 };
  const tool = "h-[21.600px] w-full shrink-0";
  return (
    <div className="absolute top-[113px] left-[1045px] flex w-[26px] flex-col items-center">
      <svg viewBox="0 0 24 24" className="size-[25px]">
        <circle cx="12" cy="12" r="12" fill="#000" />
        <path d="M8.500 3h7l3 9.500L12 21.500 5.500 12.500Z" fill="#fff" />
        <circle cx="12" cy="11" r="2.400" fill="#000" />
        <path d="M12 12v9" stroke="#000" strokeWidth="1.200" />
      </svg>
      <div className="mt-[5px] flex h-[306px] w-[25px] flex-col border border-[#d9e4ea] bg-[#fbfbfb] px-px shadow-[0_1px_4px_rgba(0,0,0,.45)]">
        <svg viewBox="0 0 24 22" className={`${tool} bg-[#2cb5ee]`}><path d="M4 11c4-6.500 12-6.500 16 0-4 6-12 6-16 0Z" fill="#fff" stroke="#222" strokeWidth="1.200" /><circle cx="12" cy="10.500" r="4" fill="#222" /><circle cx="10.800" cy="9.200" r="1.100" fill="#fff" /></svg>
        <svg viewBox="0 0 24 22" className={`${tool} bg-[#2cb5ee]`}><path d="m4 4 4.500 14 3-4 5.500 5.500 2.500-2.500-5.500-5.500 4.500-2.500Z" fill="#fff" stroke="#222" strokeWidth="1.200" />{corner}</svg>
        <svg viewBox="0 0 24 22" className={tool} {...s}><circle cx="12" cy="12" r="6.500" strokeWidth="1.800" /><path d="M12 12V8M10 3.500h4M5 19 20 3M7 20.500 21 5" />{corner}</svg>
        <svg viewBox="0 0 24 22" className={tool} {...s}><path d="m4 4 8 1 8 7-6 7-8-7ZM12 5l-6 7M10 9l7 6M8.500 11l7 6" /><path d="m4 4 3 .5-2.500 3Z" fill="#222" />{corner}</svg>
        <svg viewBox="0 0 24 22" className={tool} {...s}><path d="M4.500 3.500 19 17.500l-1 1L3.500 4.500Z" /><circle cx="20.500" cy="3.500" r="2.800" fill="#ff2d86" stroke="none" />{corner}</svg>
        <svg viewBox="0 0 24 22" className={tool} {...s}><path d="m8 3 13 10-5 6L3 9Z" fill="#eee" /><path d="m12 6-5 6" /></svg>
        <svg viewBox="0 0 24 22" className={tool}><circle cx="12" cy="11" r="3.700" fill="#222" /></svg>
        <svg viewBox="0 0 24 22" className={tool} {...s}><path d="M3.500 9.500 9.500 4v3.500h5c7 0 7 10.500 0 10.500h-2v-3h2c3 0 3-4.500 0-4.500h-5v4Z" /></svg>
        <svg viewBox="0 0 24 22" className={tool} {...s}><path d="M5.500 5.500h13M6.500 6.500h11v12h-11ZM9 5.500v-3h6v3M10 7v11M14 7v11" strokeWidth="1.300" /></svg>
        <svg viewBox="0 0 24 22" className={tool} {...s}><rect x="5.500" y="6" width="13" height="9" fill="#ddd" /><path d="M4.500 4.500h15v12h-15ZM9 16.500l-2 4M15 16.500l2 4M10 3.500h4" /><circle cx="20.500" cy="4" r="2.800" fill="#ff2d86" stroke="none" />{corner}</svg>
        <svg viewBox="0 0 24 22" className={tool} {...s}><path d="M3.500 7h4l2-2.500h5L16 7h4.500v11h-17Z" /><circle cx="10.500" cy="12" r="3.500" fill="#555" stroke="#222" strokeWidth="1.600" /><circle cx="17.500" cy="10.500" r="1.200" /></svg>
        <svg viewBox="0 0 24 22" className={tool} {...s}><path d="M5.500 4h13v15.500h-13ZM9 4c1-3 5-3 6 0v1.500H9ZM8 9h8M8 12h8M8 15h8" /></svg>
        <div className="grid w-full grid-cols-2">
          <span className="h-[11px] bg-[#00a2f3]" /><span className="h-[11px] bg-[#ffe100]" />
          <span className="h-[11px] bg-[#ff2d8c]" /><span className="h-[11px] bg-black" />
        </div>
        <span className="w-full flex-1 bg-[#ffe100]" />
      </div>
    </div>
  );
}

function SharedScreen() {
  return (
    <section className="relative mt-[3px] ml-[3px] h-[623px] w-[1115px] shrink-0 overflow-hidden border-2 border-white bg-black pr-px pl-px">
      <TabStrip />
      <div className="bg-black">
        <AddressBar />
      </div>
      <Bookmarks />
      <Sheet />
      <RemoteTaskbar />
      <Palette />
      <svg viewBox="0 0 8 12" className="absolute top-[221px] left-[327px] h-3 w-2">
        <path d="M.6.600v9.400l2.200-2 1.400 3.300 1.300-.6L4.200 7.500h2.900Z" fill="#fff" stroke="#333" strokeWidth=".8" />
      </svg>
      <div className="absolute top-[587px] left-2 flex h-6 gap-2 text-white">
        <div className="flex w-[158px] items-center rounded-[4px] bg-[#141416]/70 pl-[6px]">
          <span className="w-[131px] pt-[2px] text-[11.500px] font-semibold tracking-[-0.025em] whitespace-nowrap">Ragav Kumar V (Guest)</span>
          <MicOffIcon className="size-[14px]" cut="#1a1a1c" />
        </div>
        <div className="flex w-[66px] items-center gap-5 rounded-[4px] bg-[#141416]/90 pl-[11px]">
          <span className="h-px w-3 bg-[#4d4d4d]" />
          <svg viewBox="0 0 12 12" className="size-3" stroke="#fff"><path d="M6 0v12M0 6h12" /></svg>
        </div>
      </div>
    </section>
  );
}

/* ---------- participants ---------- */

const people = [
  { i: "NM", name: "Nithin kum...", c: "bg-[#fde9d7] text-[#94602a]" },
  { i: "AP", name: "Aishwarya ...", c: "bg-[#dbe1d8] text-[#33421f]" },
  { i: "RV", name: "Ragav Kum...", c: "bg-[#f7ebce] text-[#835b0c]" },
  { i: "NG", name: "Nikhilraj G...", c: "bg-[#e2dfee] text-[#443c68]" },
  { i: "BG", name: "Bhanusri G...", c: "bg-[#fde9d7] text-[#94602a]" },
  { i: "SC", name: "Sumana Sri...", c: "bg-[#f5d3df] text-[#771839]" },
  { i: "GC", name: "Gunasekha...", c: "bg-[#daf0f3] text-[#2f696d]" },
];

function Participants() {
  return (
    <aside className="flex flex-1 flex-col">
      <div className="ml-[13px] grid h-[491px] grid-cols-[110px_110px] content-start pt-8 text-white">
        {people.map((p) => (
          <div key={p.i} className="flex h-[110px] flex-col">
            <div className={`ml-5 flex size-[70px] items-center justify-center rounded-full pb-px text-[26px] font-semibold ${p.c}`}>{p.i}</div>
            <div className="mt-[8px] flex items-center pl-2">
              <span className="w-[79px] text-[11.400px] leading-[17px] whitespace-nowrap">{p.name}</span>
              <MicOffIcon className="mb-px size-3 text-[#d4d4d4]" cut="#1f1f1f" />
            </div>
          </div>
        ))}
        <div className="flex h-[110px] flex-col items-center">
          <div className="flex size-[70px] items-center justify-center gap-1 rounded-full border border-[#616161] bg-[#292929]">
            <span className="size-1 rounded-full bg-white" /><span className="size-1 rounded-full bg-white" /><span className="size-1 rounded-full bg-white" />
          </div>
          <span className="mt-[8px] text-[11.400px] leading-[17px]">View all</span>
        </div>
      </div>
      <div className="ml-[2px] flex h-[133px] w-[241px] items-center justify-center bg-[#333]">
        <div className="flex size-14 items-center justify-center rounded-full bg-[#cfdae9] text-[21px] font-semibold text-[#14335c]">TS</div>
      </div>
    </aside>
  );
}

/* ---------- local taskbar ---------- */

function TaskApp({ children, open, active }: { children: React.ReactNode; open?: boolean; active?: boolean }) {
  return (
    <div className={`flex h-full w-12 flex-col items-center ${active ? "bg-[#474747]" : ""}`}>
      <span className="flex flex-1 items-center pt-[2px]">{children}</span>
      <span className={`h-[2px] ${active ? "w-12" : "w-10"} ${open || active ? "bg-[#76b9ed]" : ""}`} />
    </div>
  );
}

function Taskbar() {
  return (
    <footer className="flex h-[44px] items-end bg-[#1e1e1e] text-white">
      <div className="flex h-10 w-full items-center">
        <div className="flex w-12 justify-center"><WindowsIcon className="size-4" /></div>
        <div className="flex h-10 w-72 items-center border border-[#bdbdbd] bg-[#f2f2f2] pr-[3px] pl-[11px] text-[#2b2b2b]">
          <svg viewBox="0 0 17 17" className="size-[17px]" fill="none" stroke="#222" strokeWidth="1.300"><circle cx="10.500" cy="6.500" r="5.500" /><path d="M6.500 10.500.6 16.400" /></svg>
          <span className="ml-[11px] flex-1 pt-px text-[14px] whitespace-nowrap">Type here to search</span>
          <div className="flex h-8 w-[72px] items-center justify-center gap-[2px] rounded-[6px] bg-[#111] text-[#f0692a]">
            <svg viewBox="0 0 10 10" className="size-[10px]" fill="none" stroke="#f0692a" strokeWidth=".9"><circle cx="5" cy="5" r="4.400" /><circle cx="5" cy="5" r="2.500" /><circle cx="5" cy="5" r=".8" fill="#f0692a" /></svg>
            <span className="pb-px text-[7px] leading-none tracking-[0.02em]">proclink</span>
          </div>
        </div>
        <div className="flex w-12 justify-center">
          <svg viewBox="0 0 17 17" className="size-[17px]" fill="none" stroke="#fff" strokeWidth="1.200"><path d="M.8 4.500h10.500v7.500H.8ZM.8 1v2M11.300 1v2M.8 13.500v2.500M11.300 13.500v2.500M.8 2h10.500M.8 14.700h10.500M15 1v4M15 10v6" /><path d="M15 6v3" strokeWidth="2.400" /></svg>
        </div>
        <div className="ml-[3px] flex h-10 gap-px">
          <TaskApp open><EdgeIcon /></TaskApp>
          <TaskApp><FolderIcon /></TaskApp>
          <TaskApp><StoreIcon /></TaskApp>
          <TaskApp><MailIcon /></TaskApp>
          <TaskApp open><OutlookIcon /></TaskApp>
          <TaskApp active><TeamsIcon /></TaskApp>
          <TaskApp open><VsCodeIcon /></TaskApp>
          <TaskApp open><ChromeIcon /></TaskApp>
        </div>
        <div className="ml-[133px] flex h-10 items-center">
          <WeatherIcon />
          <span className="ml-[7px] w-[38px] text-[13.700px] whitespace-nowrap">27°C</span>
          <span className="w-[105px] text-[13.800px] tracking-[-0.01em] whitespace-nowrap">Mostly cloudy</span>
          <span className="flex w-6 justify-center"><svg viewBox="0 0 12 8" className="h-[7px] w-3" fill="none" stroke="#fff" strokeWidth="1.200"><path d="m.8 7 5.200-5.500L11.200 7" /></svg></span>
          <span className="flex w-[23px] justify-center"><svg viewBox="0 0 12 17" className="h-[17px] w-3"><rect x="3" width="6" height="11.500" rx="1" fill="#fff" /><path d="M.7 8v3.500c0 1.500 1 2 2 2h6.600c1 0 2-.5 2-2V8M6 13.500V16M3 16.300h6" stroke="#fff" fill="none" strokeWidth="1.100" /></svg></span>
          <span className="flex w-[26px] justify-center"><svg viewBox="0 0 15 10" className="h-[10px] w-[15px]" fill="none" stroke="#fff"><path d="M.6.700h12v8.600H.6ZM12.600 3.200h1.800v3.600h-1.800" /><path d="M2.300 2.300h2.500v5.400H2.300Z" fill="#fff" stroke="none" /></svg></span>
          <span className="flex w-6 justify-center"><svg viewBox="0 0 13 13" className="size-[13px]" fill="none" stroke="#fff" strokeWidth="1.100"><path d="M.8 12C1 6 6 1 12 .8M3.800 12c0-4 4-8 8.200-8M7 12c0-2.500 2.500-5 5-5" /><circle cx="11" cy="11" r="1.400" fill="#fff" stroke="none" /></svg></span>
          <span className="flex w-5 justify-center"><MutedSpeaker className="h-3 w-4" /></span>
          <span className="ml-[9px] w-[36px] text-[11.400px] tracking-[-0.01em]">ENG</span>
          <div className="flex w-[58px] flex-col items-center text-[11.300px] leading-[18px] tracking-[-0.01em] whitespace-nowrap"><span>11:29</span><span>11-06-2024</span></div>
          <div className="relative ml-[18px] h-[18px] w-[18px]">
            <svg viewBox="0 0 16 16" className="size-4"><path d="M0 .5h16V13H7l-3 3v-3H0Z" fill="#fff" /><path d="M3 4h10M3 6.700h10M3 9.400h6" stroke="#1e1e1e" /></svg>
            <span className="absolute top-[7px] left-[7px] flex size-4 items-center justify-center rounded-full border border-[#9a9a9a] bg-[#2b2b2b] text-[10px] leading-none">3</span>
          </div>
          <span className="ml-[18px] h-10 w-px bg-[#5a5a5a]" />
        </div>
      </div>
    </footer>
  );
}

export default function App() {
  return (
    <div className="flex h-[768px] w-[1366px] flex-col overflow-hidden bg-[#1f1f1f] font-['Open_Sans','Noto_Sans',sans-serif]">
      <TitleBar />
      <MeetingBar />
      <main className="flex h-[625px] items-start bg-[#1f1f1f]">
        <SharedScreen />
        <Participants />
      </main>
      <Taskbar />
    </div>
  );
}
